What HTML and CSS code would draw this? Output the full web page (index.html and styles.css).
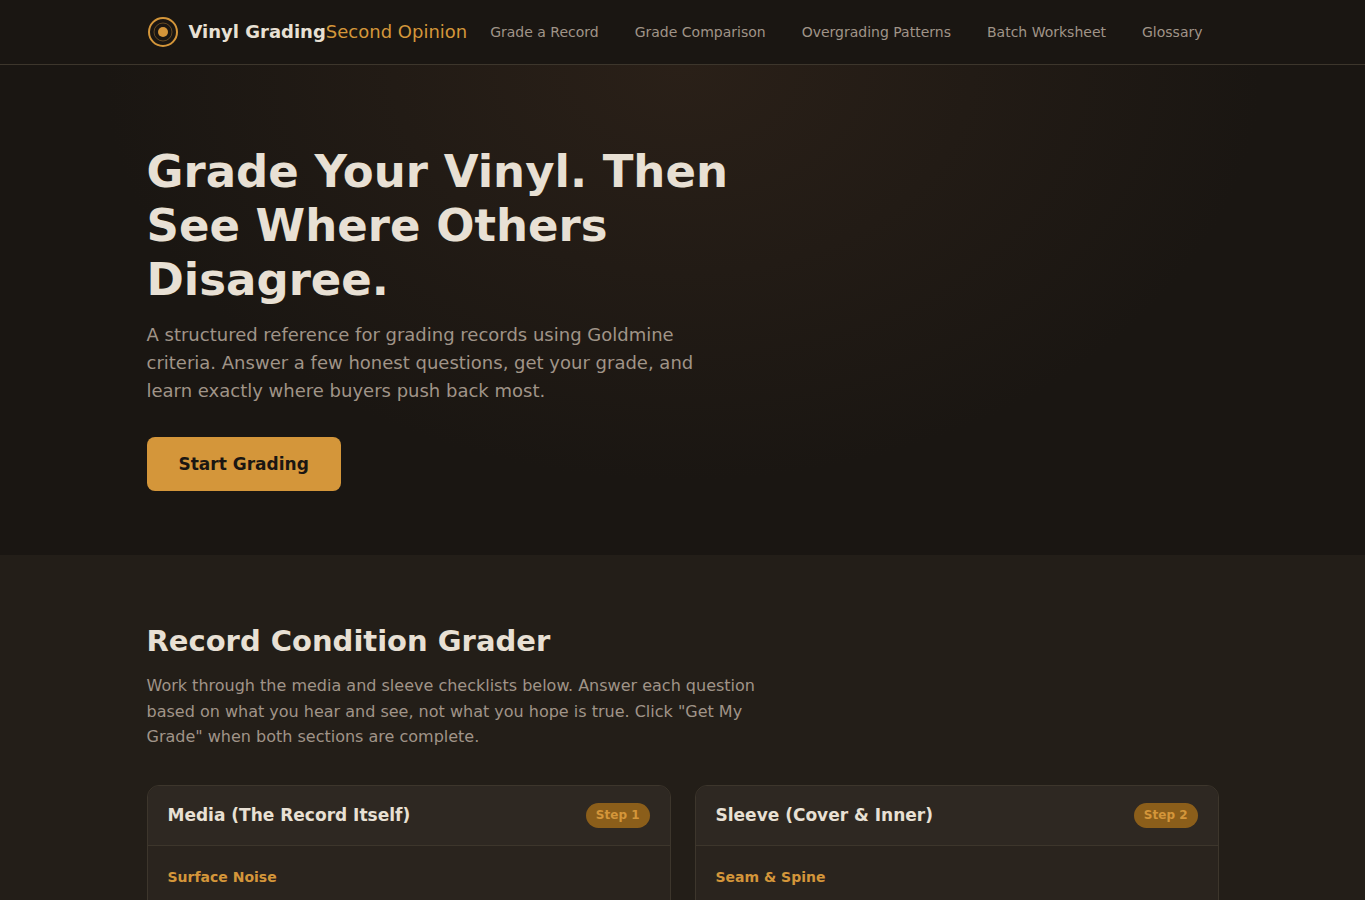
FILE: index.html
```html
<!DOCTYPE html>
<html lang="en">
<head>
    <meta charset="UTF-8">
    <meta name="viewport" content="width=device-width, initial-scale=1.0">
    <title>Vinyl Grading Second Opinion</title>
    <link rel="stylesheet" href="styles.css">
</head>
<body>
    <header class="site-header">
        <div class="container header-inner">
            <a href="#" class="logo">
                <svg class="logo-icon" viewBox="0 0 32 32" aria-hidden="true">
                    <circle cx="16" cy="16" r="14" fill="none" stroke="#d4963a" stroke-width="2"/>
                    <circle cx="16" cy="16" r="9" fill="none" stroke="#d4963a" stroke-width="1" opacity="0.4"/>
                    <circle cx="16" cy="16" r="5" fill="#d4963a"/>
                </svg>
                <span class="logo-text">Vinyl Grading<span class="logo-accent">Second Opinion</span></span>
            </a>
            <nav class="main-nav" aria-label="Main">
                <a href="#grader">Grade a Record</a>
                <a href="#comparison">Grade Comparison</a>
                <a href="#patterns">Overgrading Patterns</a>
                <a href="#worksheet">Batch Worksheet</a>
                <a href="#glossary">Glossary</a>
            </nav>
        </div>
    </header>

    <main>
        <section class="hero">
            <div class="container">
                <h1>Grade Your Vinyl. Then See Where Others Disagree.</h1>
                <p class="hero-sub">A structured reference for grading records using Goldmine criteria. Answer a few honest questions, get your grade, and learn exactly where buyers push back most.</p>
                <a href="#grader" class="btn-primary">Start Grading</a>
            </div>
        </section>

        <section class="grader" id="grader">
            <div class="container">
                <h2>Record Condition Grader</h2>
                <p class="section-desc">Work through the media and sleeve checklists below. Answer each question based on what you hear and see, not what you hope is true. Click "Get My Grade" when both sections are complete.</p>
                <div class="grader-grid">
                    <div class="card">
                        <div class="card-header">
                            <h3>Media (The Record Itself)</h3>
                            <span class="badge">Step 1</span>
                        </div>
                        <div class="card-body">
                            <h4>Surface Noise</h4>
                        </div>
                    </div>
                    <div class="card">
                        <div class="card-header">
                            <h3>Sleeve (Cover &amp; Inner)</h3>
                            <span class="badge">Step 2</span>
                        </div>
                        <div class="card-body">
                            <h4>Seam &amp; Spine</h4>
                        </div>
                    </div>
                </div>
            </div>
        </section>
    </main>
</body>
</html>
```

FILE: styles.css
```css
:root {
    --bg: #1a1612;
    --bg-alt: #231e18;
    --bg-card: #2a241e;
    --bg-card-header: #2e2822;
    --border: #3d362c;
    --text: #e8e0d4;
    --text-muted: #a09488;
    --accent: #d4963a;
    --accent-dark: #8b5e1a;
}

* {
    box-sizing: border-box;
    margin: 0;
    padding: 0;
}

body {
    font-family: "DejaVu Sans", sans-serif;
    font-size: 16px;
    line-height: 1.6;
    background: var(--bg);
    color: var(--text);
}

a {
    text-decoration: none;
}

.container {
    max-width: 1120px;
    margin: 0 auto;
    padding: 0 24px;
}

.site-header {
    background: var(--bg);
    border-bottom: 1px solid var(--border);
}

.header-inner {
    display: flex;
    align-items: center;
    justify-content: space-between;
    min-height: 64px;
}

.logo {
    display: flex;
    align-items: center;
    gap: 10px;
    color: var(--text);
    font-size: 18px;
    font-weight: 700;
    white-space: nowrap;
}

.logo-icon {
    width: 32px;
    height: 32px;
}

.logo-accent {
    color: var(--accent);
    font-weight: 400;
}

.main-nav {
    display: flex;
    gap: 4px;
}

.main-nav a {
    padding: 8px 16px;
    color: var(--text-muted);
    font-size: 14px;
    white-space: nowrap;
}

.main-nav a:hover {
    color: var(--text);
}

.hero {
    padding: 80px 0 64px;
    background: radial-gradient(ellipse at 50% 0%, #2a2018 0%, var(--bg) 60%);
}

.hero h1 {
    max-width: 640px;
    margin-bottom: 14px;
    font-size: 45px;
    line-height: 54px;
}

.hero-sub {
    max-width: 580px;
    margin-bottom: 32px;
    color: var(--text-muted);
    font-size: 18px;
    line-height: 28px;
}

.btn-primary {
    display: inline-block;
    padding: 13px 32px;
    border-radius: 8px;
    background: var(--accent);
    color: var(--bg);
    font-size: 17px;
    font-weight: 700;
    line-height: 28px;
}

.grader {
    padding: 64px 0;
    background: var(--bg-alt);
}

.grader h2 {
    margin-bottom: 10px;
    font-size: 29px;
    line-height: 44px;
}

.section-desc {
    max-width: 640px;
    margin-bottom: 35px;
    color: var(--text-muted);
}

.grader-grid {
    display: grid;
    grid-template-columns: 1fr 1fr;
    gap: 24px;
}

.card {
    overflow: hidden;
    border: 1px solid var(--border);
    border-radius: 12px;
    background: var(--bg-card);
}

.card-header {
    display: flex;
    align-items: center;
    justify-content: space-between;
    padding: 16px 20px;
    border-bottom: 1px solid var(--border);
    background: var(--bg-card-header);
}

.card-header h3 {
    font-size: 17px;
    line-height: 27px;
}

.badge {
    padding: 3px 10px;
    border-radius: 20px;
    background: var(--accent-dark);
    color: var(--accent);
    font-size: 12px;
    font-weight: 700;
}

.card-body {
    min-height: 240px;
    padding: 20px;
}

.card-body h4 {
    color: var(--accent);
    font-size: 14px;
}

@media (max-width: 900px) {
    .header-inner {
        flex-wrap: wrap;
    }

    .main-nav {
        flex-wrap: wrap;
    }

    .grader-grid {
        grid-template-columns: 1fr;
    }
}
```
